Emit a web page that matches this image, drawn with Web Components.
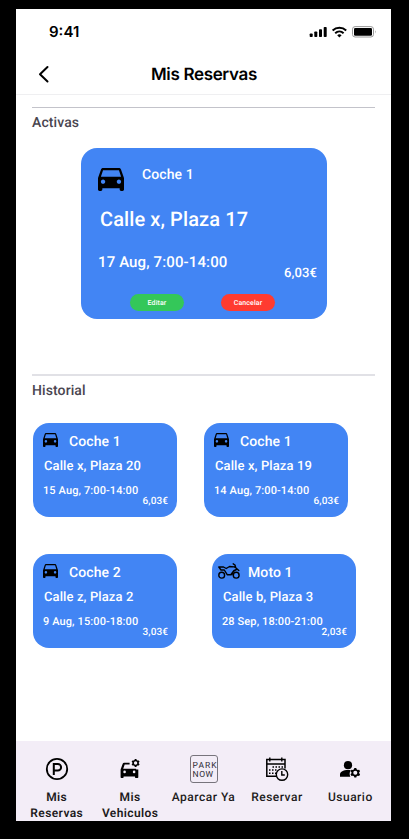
<!DOCTYPE html>
<html lang="es">
<head>
<meta charset="utf-8">
<title>Mis Reservas</title>
<style>
html,body{margin:0;background:#000;height:839px;overflow:hidden}
body{font-family:Roboto,"Liberation Sans",sans-serif;font-weight:500;text-rendering:geometricPrecision;box-sizing:border-box;padding:9px 0 0 16px}
</style>
</head>
<body>
<phone-screen>
  <status-bar></status-bar>
  <title-bar>Mis Reservas</title-bar>
  <section-head style="--line:#c3c3ca;--h:1px;--gap:12px">Activas</section-head>
  <active-booking>
    <v-icon slot="icon" name="car"></v-icon>
    <span slot="vehicle">Coche 1</span><span slot="place">Calle x, Plaza 17</span>
    <span slot="date">17 Aug, 7:00-14:00</span><span slot="price">6,03€</span>
    <pill-button slot="actions" style="--bg:#34c759">Editar</pill-button>
    <pill-button slot="actions" style="--bg:#ff3b30">Cancelar</pill-button>
  </active-booking>
  <section-head style="--line:#e1e1e6;--h:2px;--gap:55px">Historial</section-head>
  <history-row style="--gap:27px">
    <past-booking><v-icon slot="icon" name="car"></v-icon><span slot="vehicle">Coche 1</span><span slot="place">Calle x, Plaza 20</span><span slot="date">15 Aug, 7:00-14:00</span><span slot="price">6,03€</span></past-booking>
    <past-booking><v-icon slot="icon" name="car"></v-icon><span slot="vehicle">Coche 1</span><span slot="place">Calle x, Plaza 19</span><span slot="date">14 Aug, 7:00-14:00</span><span slot="price">6,03€</span></past-booking>
  </history-row>
  <history-row style="--gap:35px;--top:37px">
    <past-booking><v-icon slot="icon" name="car"></v-icon><span slot="vehicle">Coche 2</span><span slot="place">Calle z, Plaza 2</span><span slot="date">9 Aug, 15:00-18:00</span><span slot="price">3,03€</span></past-booking>
    <past-booking><v-icon slot="icon" name="moto"></v-icon><span slot="vehicle">Moto 1</span><span slot="place">Calle b, Plaza 3</span><span slot="date">28 Sep, 18:00-21:00</span><span slot="price">2,03€</span></past-booking>
  </history-row>
  <nav-bar>
    <nav-item strong icon="parking">Mis<br>Reservas</nav-item>
    <nav-item strong icon="carcog">Mis<br>Vehiculos</nav-item>
    <nav-item icon="parknow">Aparcar Ya</nav-item>
    <nav-item icon="calendar">Reservar</nav-item>
    <nav-item icon="usercog">Usuario</nav-item>
  </nav-bar>
</phone-screen>
<script>
const CAR = 'M18.92 5.01C18.72 4.42 18.16 4 17.5 4h-11c-.66 0-1.21.42-1.42 1.01L3 11v8c0 .55.45 1 1 1h1c.55 0 1-.45 1-1v-1h12v1c0 .55.45 1 1 1h1c.55 0 1-.45 1-1v-8l-2.08-5.99zM6.5 15c-.83 0-1.5-.67-1.5-1.5S5.67 12 6.5 12s1.5.67 1.5 1.5S7.33 15 6.5 15zm11 0c-.83 0-1.5-.67-1.5-1.5s.67-1.5 1.5-1.5 1.5.67 1.5 1.5-.67 1.5-1.5 1.5zM5 10l1.5-4.5h11L19 10H5z';
// Cog outline centred on the origin with a radius of about 4.
const COG = '<path fill-rule="evenodd" d="M-.8-4H.8L1.1-2.9 2-2.4 3.2-2.6 4-1.2 3.200-.4V.4L4 1.2 3.2 2.6 2 2.4 1.1 2.9.8 4H-.8L-1.1 2.9-2 2.4-3.2 2.6-4 1.2-3.200 .4V-.4L-4-1.2-3.2-2.6-2-2.4-1.1-2.9ZM0-1.700A1.700 1.700 0 1 0 0 1.700 1.700 1.700 0 1 0 0-1.700Z"/>';
const ICONS = {
  parking: '<svg width="24" height="24" viewBox="0 0 24 24" fill="none" stroke="#000"><circle cx="12" cy="12" r="10.200" stroke-width="1.800"/><path d="M8.800 18V6.900h4a3.300 3.300 0 0 1 0 6.600H8.800" stroke-width="2"/></svg>',
  carcog: `<svg width="24" height="24" viewBox="0 0 24 24"><path fill-rule="evenodd" d="M11.600 5.800H6.100c-.7 0-1.200.4-1.400 1L2.600 12.500V20.300c0 .4.3.7.7.7h1.600c.4 0 .7-.3.7-.7V19.500H17v.8c0 .4.3.7.7.7h1.900c.4 0 .7-.3.7-.7V12.600h-2l-.3-.8H5.200l1.500-4.300h4.900ZM6.600 13.600a1.300 1.300 0 1 1 0 2.600 1.300 1.300 0 0 1 0-2.600Zm9.500 0a1.300 1.300 0 1 1 0 2.600 1.300 1.300 0 0 1 0-2.600Z"/><g transform="translate(17.600 6)">${COG}</g></svg>`,
  parknow: '<svg width="30" height="30" viewBox="0 0 30 30"><rect x="1.500" y="1.500" width="27" height="27" rx="2.500" fill="none" stroke="#77747c"/><g fill="#2d2a32" font-family="Roboto, sans-serif" font-weight="400" font-size="8.500"><text x="3.500" y="14" letter-spacing="1.100">PARK</text><text x="3.500" y="22.500" letter-spacing=".6">NOW</text></g></svg>',
  calendar: '<svg width="24" height="24" viewBox="0 0 24 24" fill="none" stroke="#000"><path d="M11.500 19.300H1.800V2.600H20v9M1.800 6.900H20" stroke-width="1.500"/><path d="M4.800.5v4M16.800.5v4" stroke-width="1.400"/><path d="M7.500 10h11M4 13h9M4 16.300h7" stroke-width="1.500" stroke-dasharray="1.500 1.500"/><circle cx="17" cy="17.600" r="5.700" fill="#f3edf7" stroke-width="1.400"/><path d="M16.800 14v4h3" stroke-width="1.400"/></svg>',
  usercog: `<svg width="24" height="24" viewBox="0 0 24 24"><circle cx="10" cy="8.200" r="4.100"/><path d="M12.800 13.300c-2-.4-6.300-.5-8.900 1.100C2.700 15.200 2 16 2 17.300v2.500H12.300c-1-2.200-.8-4.700.5-6.500Z"/><g transform="translate(17.300 15.800) scale(1.200)">${COG}</g></svg>`
};
function define(name, html, setup) {
  const t = document.createElement('template');
  t.innerHTML = html;
  customElements.define(name, class extends HTMLElement {
    constructor() { super(); this.attachShadow({mode: 'open'}).append(t.content.cloneNode(true)); }
    connectedCallback() { if (setup) setup(this, this.shadowRoot); }
  });
}
define('phone-screen', '<style>:host{display:flex;flex-direction:column;width:375px;height:812px;background:#fff;overflow:hidden}</style><slot></slot>');
define('status-bar', `<style>:host{display:flex;justify-content:space-between;height:44px;box-sizing:border-box;padding:14px 14px 0 33px;font:600 15px/18px Inter,sans-serif;color:#000}svg{display:block}</style><span>9:41</span>
<svg width="68" height="18" viewBox="0 0 68 18"><g><rect x=".7" y="10.500" width="3" height="3.500" rx=".8"/><rect x="5.300" y="8.500" width="3" height="5.500" rx=".8"/><rect x="10" y="6.200" width="3" height="7.800" rx=".8"/><rect x="14.700" y="4" width="3" height="10" rx=".8"/></g>
<g fill="none" stroke="#000" stroke-width="2"><path d="M23.600 7.400a10 10 0 0 1 13.600 0M26.200 10.200a6.200 6.200 0 0 1 8.400 0"/></g><path d="M28.200 12.200a3.400 3.400 0 0 1 4.400 0L30.400 14.400Z"/><rect x="43.500" y="3.600" width="21" height="10.400" rx="2.600" fill="none" stroke="#999"/><rect x="45" y="5" width="18" height="7.700" rx="1.300"/><path d="M66 7.200q1.500 1.600 0 3.200Z" fill="#999"/></svg>`);
define('title-bar', `<style>:host{display:flex;align-items:center;justify-content:center;height:41px;border-bottom:1px solid #efeff1;font:600 17px/22px Inter,sans-serif;letter-spacing:-.34px;color:#000}svg{width:12px;height:18px;margin-left:22px}span{flex:1;text-align:center;padding:2px 33px 0 0}</style><svg viewBox="0 0 12 18" fill="none" stroke="#000" stroke-width="2" stroke-linecap="round" stroke-linejoin="round"><path d="M9.500 2 2 9.200l7.500 7.300"/></svg><span><slot></slot></span>`);
define('section-head', '<style>:host{display:block;margin:var(--gap) 16px 0;border-top:var(--h) solid var(--line);padding-top:5px;font-size:14px;line-height:20px;letter-spacing:.1px;color:#49454f}</style><slot></slot>');
define('v-icon', '<style>:host{display:block}svg{display:block;width:100%;height:100%}</style><svg></svg>', (el, r) => {
  const s = r.querySelector('svg');
  if (el.getAttribute('name') === 'car') { s.setAttribute('viewBox', '3 4 18 16'); s.innerHTML = `<path d="${CAR}"/>`; s.setAttribute('preserveAspectRatio', 'none'); }
  else { el.style.cssText = 'width:22px;height:16px;margin:0 -3px 0 -4px'; s.setAttribute('viewBox', '0 0 22 16');
    s.innerHTML = '<g fill="none" stroke="#000" stroke-width="1.400" stroke-linejoin="round" stroke-linecap="round"><circle cx="3.700" cy="12.200" r="2.900"/><circle cx="18.200" cy="12.200" r="2.900"/><path d="M15.200.8 17 2 17.700 4.700 20.800 7.600M.8 4h4.700l2.700 1.500L11.500 3.500l4.700.4 1.500.8M.8 4 3 7h3.300l2.900 4.700h3.600L16 7.500M18.500 6.500Q15 7.500 14 11.700"/></g>'; }
});
define('pill-button', '<style>:host{display:block;width:54px;height:17px;box-sizing:border-box;padding-top:1px;border-radius:9px;background:var(--bg);color:#fff;text-align:center;font-size:7px;line-height:16px;letter-spacing:.1px}</style><slot></slot>');
define('active-booking', `<style>
:host{display:grid;grid-template-rows:52px 48px 32px 14px 17px;align-self:center;width:246px;height:171px;border-radius:16px;background:#4285f4;color:#fff;margin:15px 0 0 1px}
.top{display:flex;padding:17px 0 0 17px;gap:18px;font-size:14px;line-height:20px;letter-spacing:.1px}
.icon{width:26px;height:23px;padding-top:3px}::slotted(v-icon){width:26px;height:23px}
.place{padding:5px 0 0 19px;font-size:20px;line-height:28px;letter-spacing:.1px;white-space:nowrap}
.date{padding:4px 0 0 17px;font-size:15px;line-height:20px;letter-spacing:.12px;white-space:nowrap}
.price{text-align:right;padding-right:10px;font-size:13px;line-height:16px;letter-spacing:.1px;margin-top:-14px}
.actions{display:flex;gap:37px;padding-left:49px}
</style><div class="top"><div class="icon"><slot name="icon"></slot></div><slot name="vehicle"></slot></div><div class="place"><slot name="place"></slot></div><div class="date"><slot name="date"></slot></div><div class="price"><slot name="price"></slot></div><div class="actions"><slot name="actions"></slot></div>`);
define('history-row', '<style>:host{display:flex;gap:var(--gap);margin:var(--top,22px) 0 0 17px}</style><slot></slot>');
define('past-booking', `<style>
:host{display:block;width:144px;height:94px;border-radius:16px;background:#4285f4;color:#fff;box-sizing:border-box;padding:9px 9px 0 10px;white-space:nowrap}
.top{display:flex;gap:11px;font-size:14px;line-height:20px;letter-spacing:.1px}
::slotted(v-icon){width:15px;height:14px;margin-top:1px}
.place{font-size:13px;line-height:18px;letter-spacing:.1px;margin:6px 0 0 1px}
.date{font-size:11px;line-height:16px;letter-spacing:.11px;margin-top:7px}
.price{font-size:10px;line-height:12px;letter-spacing:.1px;text-align:right;margin-top:-3px}
</style><div class="top"><slot name="icon"></slot><slot name="vehicle"></slot></div><div class="place"><slot name="place"></slot></div><div class="date"><slot name="date"></slot></div><div class="price"><slot name="price"></slot></div>`);
define('nav-bar', '<style>:host{display:flex;box-sizing:border-box;height:80px;margin-top:auto;padding:12px 4px 0;background:#f3edf7;color:#1d1b20}</style><slot></slot>');
define('nav-item', `<style>:host{display:flex;flex-direction:column;align-items:center;flex:1;min-width:0;font-size:12px;font-weight:500;line-height:16px;letter-spacing:.5px;text-align:center;white-space:nowrap}:host([strong]){font-weight:600;letter-spacing:.4px}.i{height:32px;display:flex;align-items:center}.t{margin-top:4px}svg{display:block}</style><div class="i"></div><div class="t"><slot></slot></div>`, (el, r) => { r.querySelector('.i').innerHTML = ICONS[el.getAttribute('icon')]; });
</script>
</body>
</html>
